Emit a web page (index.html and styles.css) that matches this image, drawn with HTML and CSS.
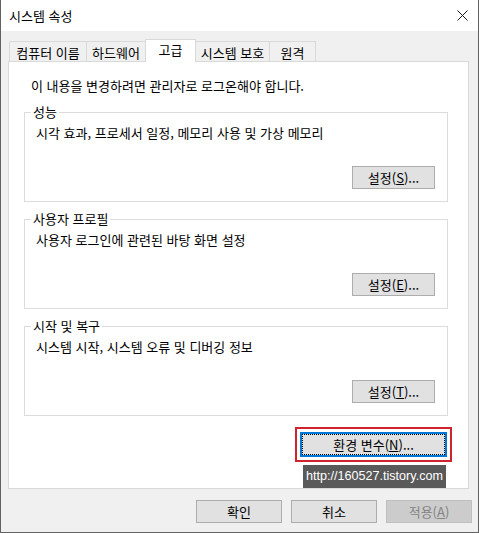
FILE: index.html
```html
<!DOCTYPE html>
<html lang="ko">
<head>
<meta charset="utf-8">
<title>시스템 속성</title>
<link rel="stylesheet" href="styles.css">
</head>
<body>
<div class="window">
  <div class="titlebar">
    <span class="title">시스템 속성</span>
    <svg class="close" width="11" height="11" viewBox="0 0 11 11"><path d="M0.5 0.5 L10.5 10.5 M10.5 0.5 L0.5 10.5" stroke="#1a1a1a" stroke-width="1" fill="none"/></svg>
  </div>
  <div class="client">
    <div class="tabs">
      <div class="tab t1">컴퓨터 이름</div>
      <div class="tab t2">하드웨어</div>
      <div class="tab t3 active">고급</div>
      <div class="tab t4">시스템 보호</div>
      <div class="tab t5">원격</div>
    </div>
    <div class="panel">
      <p class="note">이 내용을 변경하려면 관리자로 로그온해야 합니다.</p>
      <fieldset class="group">
        <legend>성능</legend>
        <p class="desc">시각 효과, 프로세서 일정, 메모리 사용 및 가상 메모리</p>
        <div class="btnrow"><button class="btn set">설정(<u>S</u>)...</button></div>
      </fieldset>
      <fieldset class="group">
        <legend>사용자 프로필</legend>
        <p class="desc">사용자 로그인에 관련된 바탕 화면 설정</p>
        <div class="btnrow"><button class="btn set">설정(<u>E</u>)...</button></div>
      </fieldset>
      <fieldset class="group">
        <legend>시작 및 복구</legend>
        <p class="desc">시스템 시작, 시스템 오류 및 디버깅 정보</p>
        <div class="btnrow"><button class="btn set">설정(<u>T</u>)...</button></div>
      </fieldset>
      <div class="envrow">
        <div class="redbox"><button class="btn env">환경 변수(<u>N</u>)...</button></div>
      </div>
      <div class="wmrow"><span class="wm">http://160527.tistory.com</span></div>
    </div>
    <div class="footer">
      <button class="btn foot">확인</button>
      <button class="btn foot">취소</button>
      <button class="btn foot disabled">적용(<u>A</u>)</button>
    </div>
  </div>
</div>
</body>
</html>
```
FILE: styles.css
```css
html, body {
  margin: 0;
  padding: 0;
  background: #f0f0f0;
}
body {
  font-family: "Noto Sans CJK KR", "Malgun Gothic", sans-serif;
  font-size: 13px;
  line-height: 16px;
  color: #000;
}
.window {
  width: 479px;
  height: 533px;
  box-sizing: border-box;
  border: 1px solid #626262;
  border-top: 0;
  background: #f0f0f0;
  display: flex;
  flex-direction: column;
}
.titlebar {
  height: 31px;
  flex: none;
  background: #fff;
  display: flex;
  align-items: center;
  justify-content: space-between;
  padding: 0 10px 0 8px;
}
.title {
  font-size: 13px;
  padding-top: 1px;
}
.close {
  display: block;
}
.client {
  padding: 8px 9px 0 7px;
  display: flex;
  flex-direction: column;
}
.tabs {
  display: flex;
  align-items: flex-end;
  margin-left: 1px;
}
.tab {
  box-sizing: border-box;
  height: 20px;
  border: 1px solid #d9d9d9;
  border-bottom: 0;
  margin-left: -1px;
  background: #f0f0f0;
  text-align: center;
  line-height: 19px;
  padding-top: 1px;
}
.tab:first-child { margin-left: 0; }
.t1 { width: 78px; }
.t2 { width: 60px; }
.t3 { width: 51px; }
.t4 { width: 75px; }
.t5 { width: 47px; }
.tab.active {
  height: 23px;
  margin-bottom: -1px;
  background: #fff;
  position: relative;
  z-index: 1;
  padding-top: 0;
  line-height: 20px;
}
.panel {
  background: #fff;
  border: 1px solid #d9d9d9;
  padding: 16px 20px 0 15px;
  display: flex;
  flex-direction: column;
}
.note {
  margin: 0 0 0 7px;
}
.group {
  margin: 10px 0 0 0;
  padding: 5px 12px 12px 11px;
  border: 1px solid #dcdcdc;
  min-width: 0;
}
.group + .group { margin-top: 9px; }
.group legend {
  padding: 0 2px;
  margin-left: -5px;
  line-height: 16px;
}
.desc {
  margin: 0;
}
.btnrow {
  display: flex;
  justify-content: flex-end;
  margin-top: 25px;
}
.btn {
  font-family: inherit;
  font-size: 13px;
  line-height: 16px;
  color: #000;
  background: #e1e1e1;
  border: 1px solid #adadad;
  border-radius: 0;
  box-sizing: border-box;
  height: 23px;
  padding: 0;
  margin: 0;
}
.btn u { text-decoration: underline; text-underline-offset: 1px; }
.set { width: 83px; }
.envrow {
  display: flex;
  justify-content: flex-end;
  margin: 11px -4px 0 0;
}
.redbox {
  border: 2px solid #d1232d;
  padding: 3px;
  background: #fff;
}
.env {
  width: 147px;
  height: 25px;
  border: 2px solid #0078d7;
  outline: 1px dotted #000;
  outline-offset: -3px;
}
.wmrow {
  display: flex;
  justify-content: flex-end;
  margin: 3px 2px 0 0;
}
.wm {
  background: #595959;
  color: #fff;
  font-family: "Liberation Sans", Arial, sans-serif;
  font-size: 12.6px;
  height: 23px;
  line-height: 23px;
  width: 143px;
  text-align: center;
}
.footer {
  display: flex;
  justify-content: flex-end;
  gap: 9px;
  margin: 11px -3px 0 0;
}
.foot { width: 86px; }
.disabled {
  background: #cccccc;
  border-color: #bfbfbf;
  color: #838383;
}
```
